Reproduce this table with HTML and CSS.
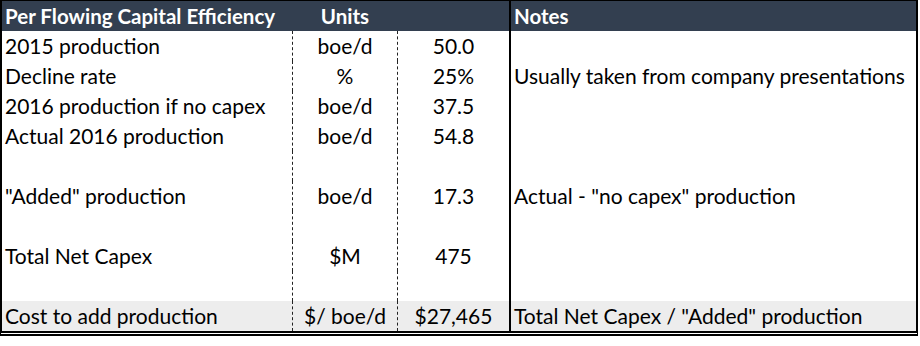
FILE: index.html
```html
<!DOCTYPE html>
<html>
<head>
<meta charset="utf-8">
<link rel="stylesheet" href="styles.css">
</head>
<body>
<div class="sheet">
  <div class="row head">
    <div class="c c1">Per Flowing Capital Efficiency</div>
    <div class="c c2">Units</div>
    <div class="c c3"></div>
    <div class="c c4">Notes</div>
  </div>
  <div class="row">
    <div class="c c1">2015 production</div>
    <div class="c c2">boe/d</div>
    <div class="c c3">50.0</div>
    <div class="c c4"></div>
  </div>
  <div class="row">
    <div class="c c1">Decline rate</div>
    <div class="c c2">%</div>
    <div class="c c3">25%</div>
    <div class="c c4">Usually taken from company presentations</div>
  </div>
  <div class="row">
    <div class="c c1">2016 production if no capex</div>
    <div class="c c2">boe/d</div>
    <div class="c c3">37.5</div>
    <div class="c c4"></div>
  </div>
  <div class="row">
    <div class="c c1">Actual 2016 production</div>
    <div class="c c2">boe/d</div>
    <div class="c c3">54.8</div>
    <div class="c c4"></div>
  </div>
  <div class="row">
    <div class="c c1"></div>
    <div class="c c2"></div>
    <div class="c c3"></div>
    <div class="c c4"></div>
  </div>
  <div class="row">
    <div class="c c1">"Added" production</div>
    <div class="c c2">boe/d</div>
    <div class="c c3">17.3</div>
    <div class="c c4">Actual - "no capex" production</div>
  </div>
  <div class="row">
    <div class="c c1"></div>
    <div class="c c2"></div>
    <div class="c c3"></div>
    <div class="c c4"></div>
  </div>
  <div class="row">
    <div class="c c1">Total Net Capex</div>
    <div class="c c2">$M</div>
    <div class="c c3">475</div>
    <div class="c c4"></div>
  </div>
  <div class="row">
    <div class="c c1"></div>
    <div class="c c2"></div>
    <div class="c c3"></div>
    <div class="c c4"></div>
  </div>
  <div class="row total">
    <div class="c c1">Cost to add production</div>
    <div class="c c2">$/ boe/d</div>
    <div class="c c3">$27,465</div>
    <div class="c c4">Total Net Capex / "Added" production</div>
  </div>
</div>
</body>
</html>
```
FILE: styles.css
```css
html, body {
  margin: 0;
  padding: 0;
  background: #ffffff;
}

.sheet {
  width: 914px;
  border-left: 2px solid #000;
  border-right: 2px solid #000;
  border-top: 1px solid #000;
  border-bottom: 5px double #000;
  font-family: "Lato", "Liberation Sans", sans-serif;
  font-size: 21px;
  color: #000;
}

.row {
  display: grid;
  grid-template-columns: 290px 105px 112px 407px;
  height: 30px;
}

.c {
  box-sizing: border-box;
  line-height: 30px;
  white-space: nowrap;
  overflow: hidden;
}

.c1 {
  padding-left: 3px;
}

.c2 {
  border-left: 1px dashed #222;
  text-align: center;
}

.c3 {
  border-left: 1px dashed #222;
  text-align: center;
}

.c4 {
  border-left: 2px solid #000;
  padding-left: 3px;
}

.head {
  background: #333f50;
  color: #ffffff;
  font-weight: bold;
  font-size: 20.5px;
}

.head .c2,
.head .c3 {
  border-left-color: transparent;
}

.total {
  background: #ededed;
}
```
